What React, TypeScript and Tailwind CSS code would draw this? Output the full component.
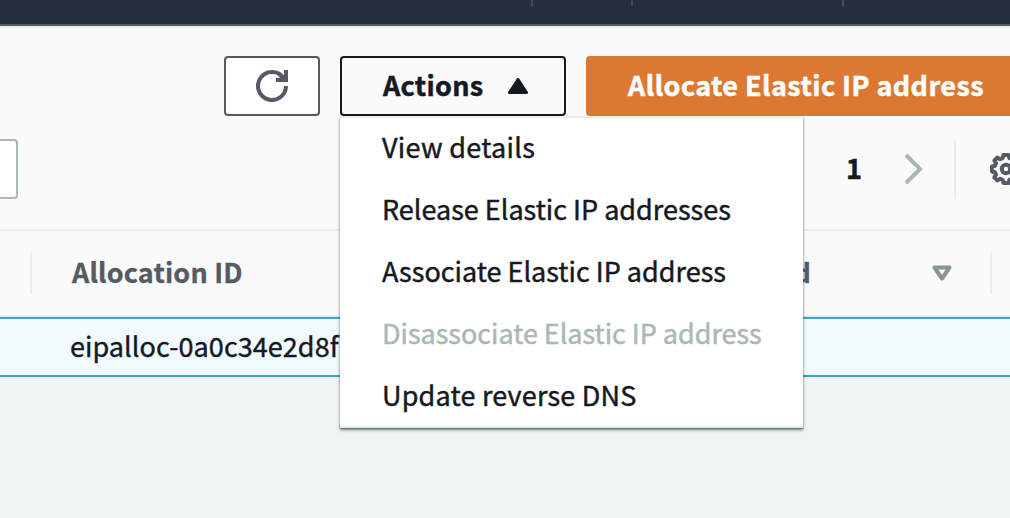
const menuItems = [
  { label: "View details", className: "tracking-[0.3px]" },
  { label: "Release Elastic IP addresses", className: "tracking-[0px]" },
  { label: "Associate Elastic IP address", className: "tracking-[0px]" },
  { label: "Disassociate Elastic IP address", className: "tracking-[-0.03px] text-[#aab7b8]" },
  { label: "Update reverse DNS", className: "tracking-[0.2px]" },
];

function RefreshIcon() {
  return (
    <svg width="32" height="32" viewBox="0 0 32 32" fill="none" stroke="#545b64" strokeWidth="4">
      <path d="M30 16A14 14 0 1 1 27.5 8" />
      <path d="M30 0V10H20" />
      <path d="M24 5L29 10" />
    </svg>
  );
}

function GearIcon() {
  return (
    <svg className="shrink-0" width="32" height="32" viewBox="0 0 32 32" fill="none" stroke="#545b64" strokeWidth="4" strokeLinejoin="round">
      <path d="M13.5 2H18.5L19.4 5.2L21.9 6.2L24.8 4.6L27.6 7.4L26 10.2L27 12.7L30 13.5V18.5L27 19.3L26 21.8L27.6 24.6L24.8 27.4L21.9 25.8L19.4 26.8L18.5 30H13.5L12.6 26.8L10.1 25.8L7.2 27.4L4.4 24.6L6 21.8L5 19.3L2 18.5V13.5L5 12.7L6 10.2L4.4 7.4L7.2 4.6L10.1 6.2L12.6 5.2Z" />
      <circle cx="16" cy="16" r="4.2" />
    </svg>
  );
}

function ActionsMenu() {
  return (
    <div className="absolute left-0 top-[60px] z-10 flex h-[312px] w-[463px] flex-col justify-center border-y-2 border-[#eaeded] bg-white font-normal shadow-[0_2px_3px_rgba(0,28,36,0.5),0_1px_1px_rgba(0,28,36,0.3)]">
      {menuItems.map((item) => (
        <div key={item.label} className="flex h-[62px] shrink-0 items-center whitespace-nowrap pb-[2px] pl-[42px] [-webkit-text-stroke:0.45px]">
          <span className={item.className}>{item.label}</span>
        </div>
      ))}
    </div>
  );
}

export default function App() {
  return (
    <div className="flex h-[518px] w-[1010px] flex-col overflow-hidden bg-[#f2f3f3] font-['Noto_Sans_CJK_JP','Noto_Sans',sans-serif] text-[27px] leading-[40px] text-[#16191f]">
      <nav className="flex h-[26px] shrink-0 items-start border-b-2 border-[#545b64] bg-[#262f3e]">
        <i className="ml-[531px] h-[6px] w-[2px] bg-[#474b54]" />
        <i className="ml-[98px] h-[6px] w-[2px] bg-[#474b54]" />
        <i className="ml-[209px] h-[6px] w-[2px] bg-[#474b54]" />
      </nav>
      <header className="flex h-[205px] shrink-0 flex-col border-y-2 border-[#eaeded] bg-[#fafafa] pt-[28px]">
        <div className="flex h-[60px] gap-[20px] pl-[224px] font-bold">
          <button className="flex w-[96px] shrink-0 items-center justify-center rounded-[4px] border-2 border-[#545b64] bg-white">
            <RefreshIcon />
          </button>
          <div className="relative w-[226px] shrink-0">
            <button className="flex h-[60px] w-full items-center rounded-[4px] border-2 border-[#16191f] pl-[41px]">
              <span className="w-[125px] pb-[2px] text-left tracking-[0.3px] [-webkit-text-stroke:0.5px]">Actions</span>
              <svg width="20" height="16" viewBox="0 0 20 16" fill="#16191f" stroke="#16191f" strokeWidth="3" strokeLinejoin="round">
                <path d="M10 1.5L18.5 14.5H1.5Z" />
              </svg>
            </button>
            <ActionsMenu />
          </div>
          <button className="w-[440px] shrink-0 whitespace-nowrap rounded-[4px] bg-[#dd7833] pb-[2px] pl-[42px] text-left tracking-[0.42px] text-white [-webkit-text-stroke:0.5px]">
            Allocate Elastic IP address
          </button>
        </div>
        <div className="mt-[23px] flex h-[60px] items-center">
          <div className="h-[60px] w-[18px] shrink-0 rounded-r-[4px] border-2 border-l-0 border-[#aab7b8] bg-white" />
          <span className="ml-[828px] w-[58px] shrink-0 pb-[2px] font-bold [-webkit-text-stroke:0.5px]">1</span>
          <svg className="shrink-0" width="19" height="32" viewBox="0 0 19 32" fill="none" stroke="#aab7b8" strokeWidth="4">
            <path d="M2 2L16 16L2 30" />
          </svg>
          <div className="ml-[31px] mr-[34px] h-[60px] w-[2px] shrink-0 bg-[#eaeded]" />
          <GearIcon />
        </div>
      </header>
      <div className="flex h-[86px] shrink-0 items-center border-b-2 border-[#eaeded] bg-[#fafafa] font-bold text-[#545b64]">
        <i className="ml-[30px] h-[42px] w-[2px] bg-[#eaeded]" />
        <span className="ml-[40px] w-[500px] pb-[2px] tracking-[0.15px] [-webkit-text-stroke:0.3px]">Allocation ID</span>
        <span className="w-[239px] pb-[2px] text-right [-webkit-text-stroke:0.3px]">d</span>
        <svg className="ml-[121px]" width="20" height="16" viewBox="0 0 20 16" fill="none" stroke="#879596" strokeWidth="4" strokeLinejoin="round">
          <path d="M2.5 2.5H17.5L10 13.5Z" />
        </svg>
        <i className="ml-[38px] h-[42px] w-[2px] bg-[#eaeded]" />
      </div>
      <div className="flex h-[60px] shrink-0 items-center border-y-2 border-[#44a0c5] bg-[#f1faff] pl-[70px]">
        <span className="w-[300px] overflow-hidden whitespace-nowrap pb-[2px] tracking-[0.05px] [-webkit-text-stroke:0.4px]">eipalloc-0a0c34e2d8f</span>
      </div>
    </div>
  );
}
